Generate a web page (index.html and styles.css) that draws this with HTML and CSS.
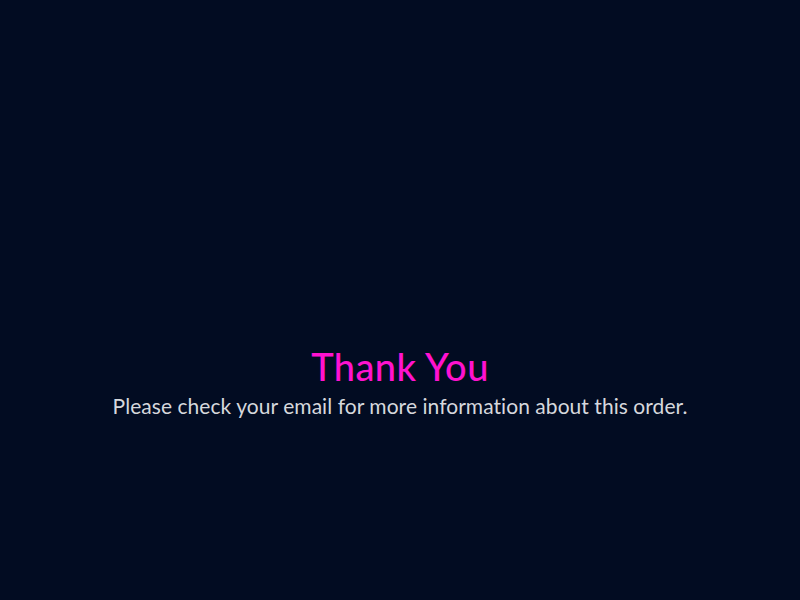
FILE: index.html
```html
<!DOCTYPE html>
<html>
<head>
<meta charset="utf-8">
<link rel="stylesheet" href="styles.css">
</head>
<body>
<main class="page">
  <section class="thanks">
    <h1 class="thanks-title">Thank You</h1>
    <p class="thanks-text">Please check your email for more information about this order.</p>
  </section>
</main>
</body>
</html>
```
FILE: styles.css
```css
html, body {
  margin: 0;
  padding: 0;
  background: #020c22;
}
.page {
  height: 600px;
  display: flex;
  flex-direction: column;
  align-items: center;
  padding-top: 344px;
  box-sizing: border-box;
}
.thanks {
  display: flex;
  flex-direction: column;
  align-items: center;
  font-family: "Lato", sans-serif;
}
.thanks-title {
  margin: 0;
  color: #ff12cf;
  font-size: 38px;
  font-weight: 500;
  line-height: 44px;
  letter-spacing: 0.4px;
}
.thanks-text {
  margin: 5px 0 0;
  color: #d6d8dd;
  font-size: 21px;
  line-height: 26px;
  letter-spacing: 0.05px;
}
```
